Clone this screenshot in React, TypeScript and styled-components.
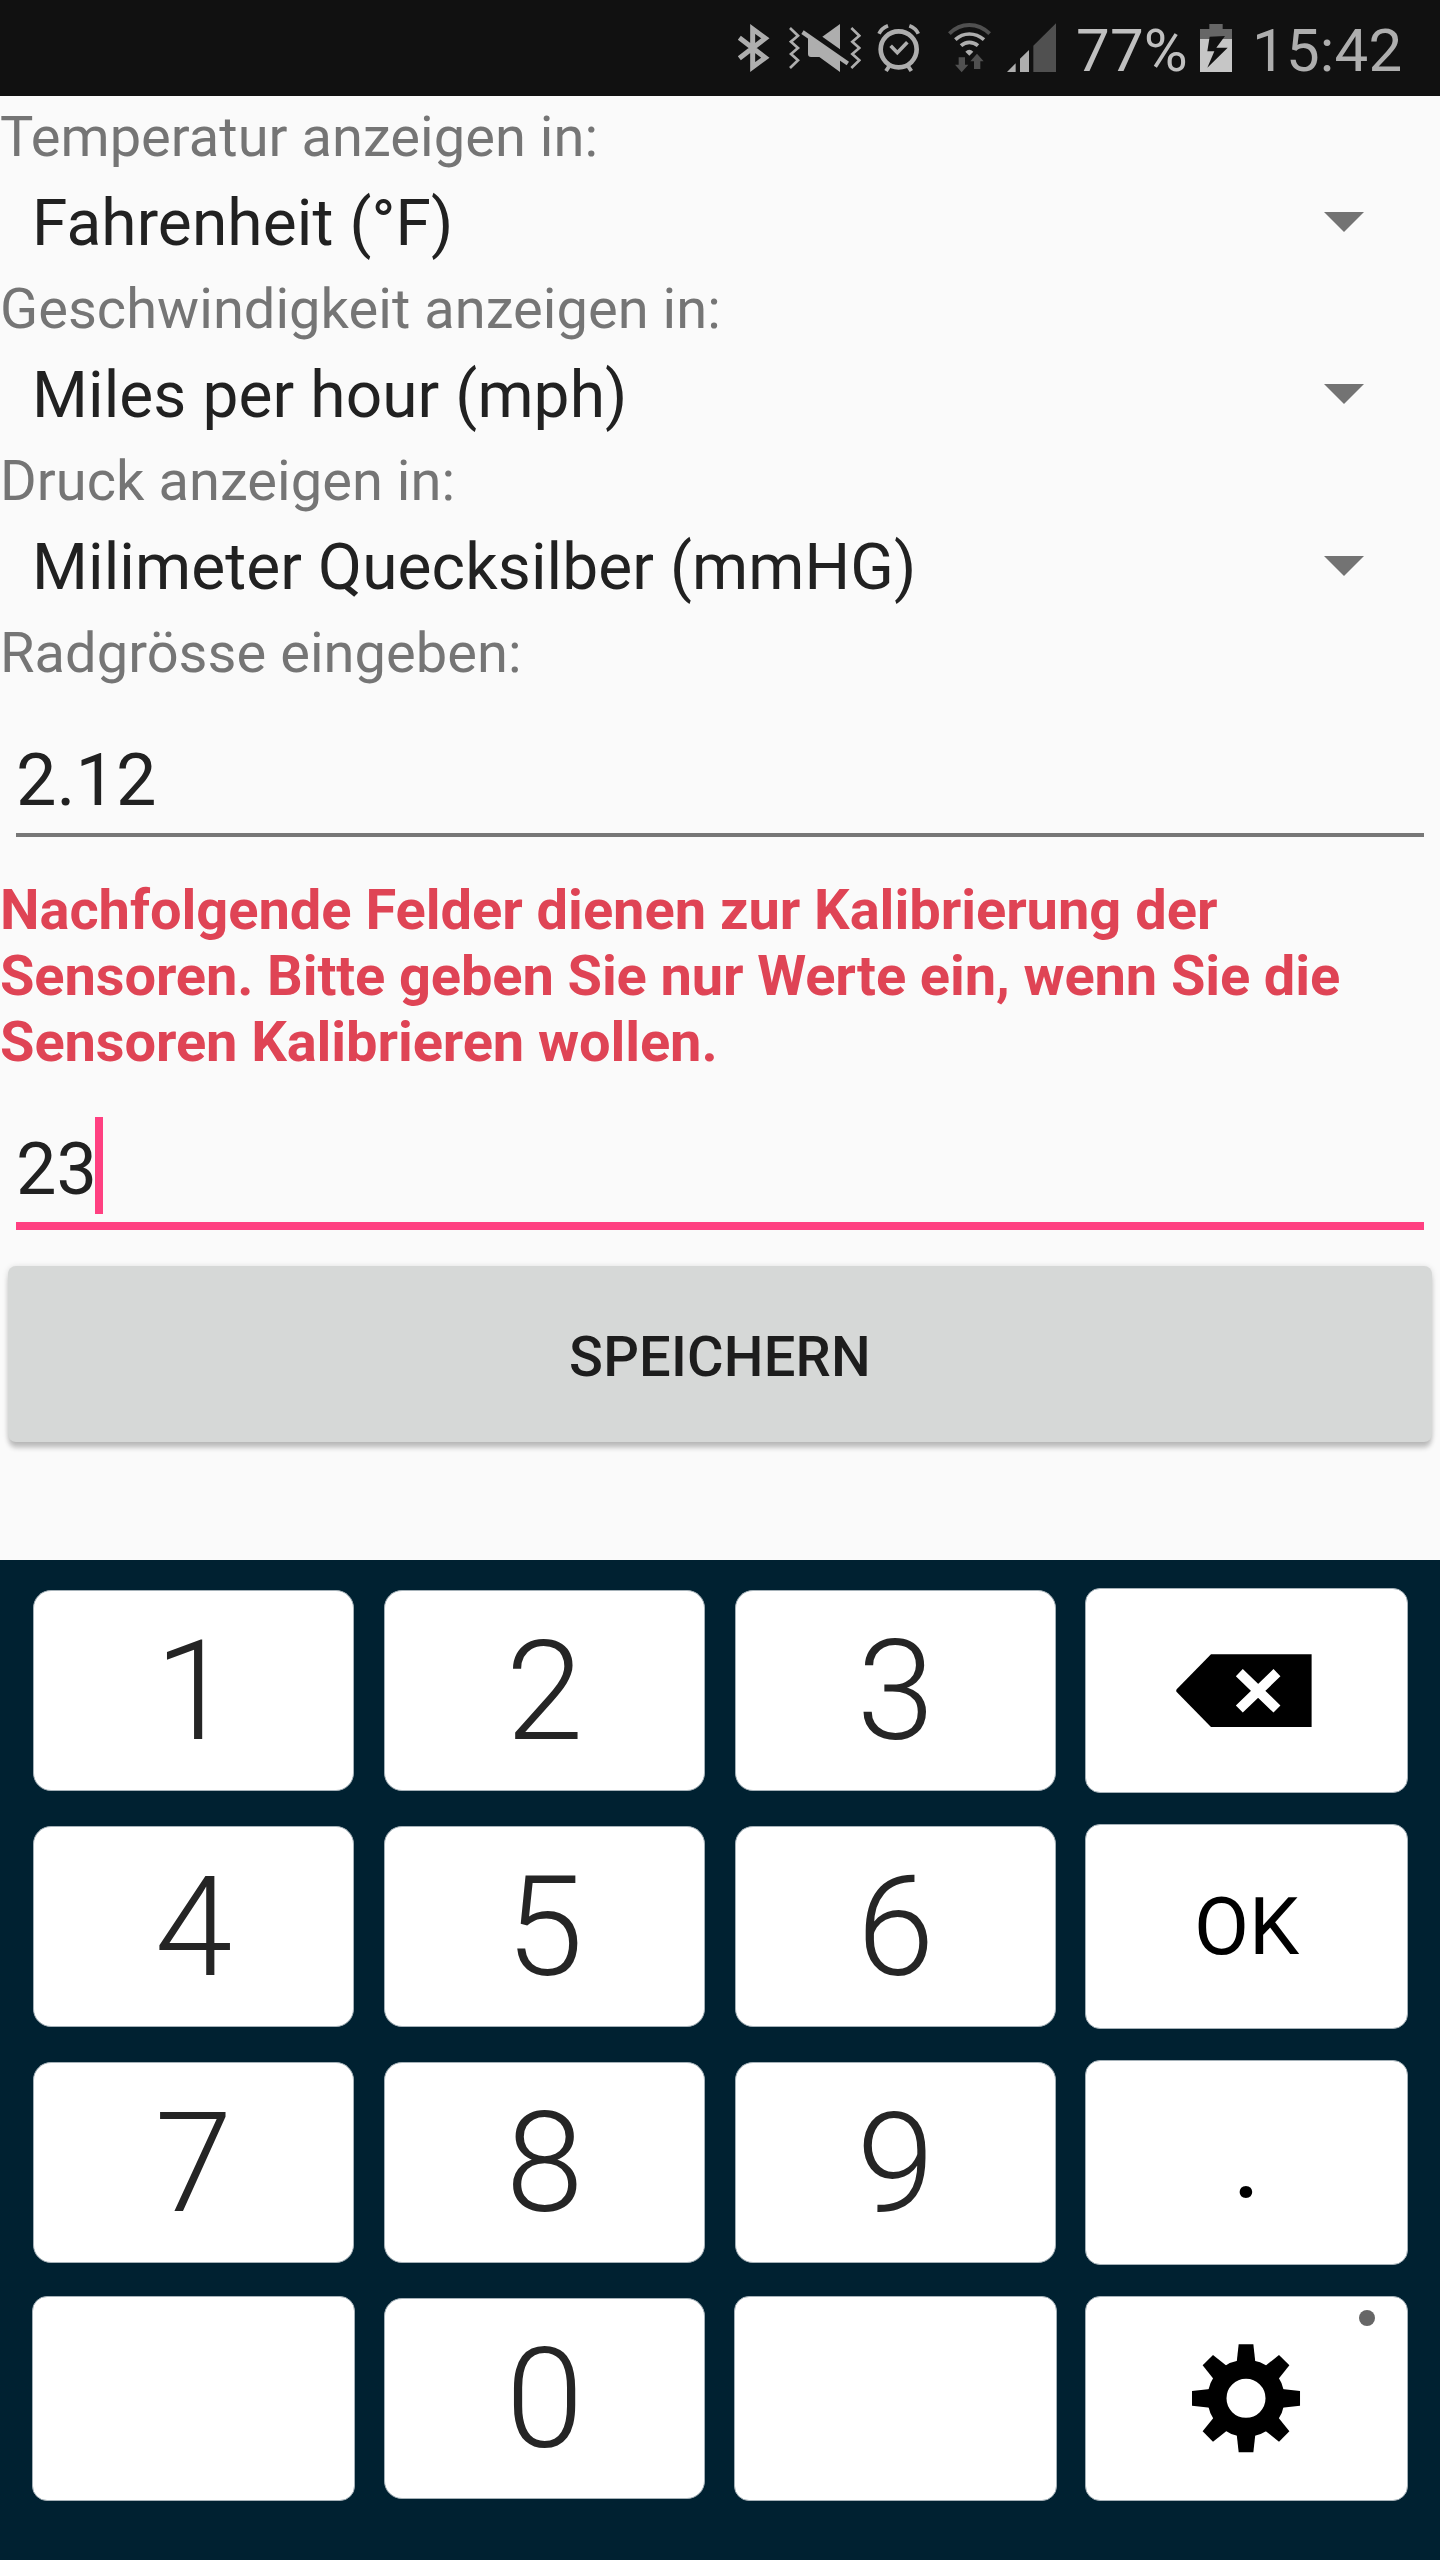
import React from "react";
import styled, { createGlobalStyle } from "styled-components";

const GlobalStyle = createGlobalStyle`
  *, *::before, *::after { box-sizing: border-box; }
  body { margin: 0; background: #fafafa; }
`;

const Screen = styled.div`
  width: 1440px;
  height: 2560px;
  display: flex;
  flex-direction: column;
  overflow: hidden;
  background: #fafafa;
  color: #212121;
  font-family: Roboto, "Liberation Sans", sans-serif;
`;

const StatusBar = styled.header`
  flex: none;
  height: 96px;
  padding-right: 36px;
  display: flex;
  align-items: center;
  justify-content: flex-end;
  background: #111;
`;

const StatusIcon = styled.svg<{ $width: number; $after: number }>`
  flex: none;
  display: block;
  width: ${(p) => p.$width}px;
  height: 96px;
  margin-right: ${(p) => p.$after}px;
`;

const StatusText = styled.span<{ $color: string; $width: number }>`
  flex: none;
  width: ${(p) => p.$width}px;
  padding-top: 5px;
  font-size: 60px;
  line-height: 70px;
  letter-spacing: 0.2px;
  white-space: nowrap;
  color: ${(p) => p.$color};
`;

const Form = styled.main`
  flex: none;
  height: 1464px;
  display: flex;
  flex-direction: column;
`;

const Label = styled.label`
  flex: none;
  height: 76px;
  padding-top: 8px;
  font-size: 56px;
  line-height: 66px;
  letter-spacing: 0.04px;
  color: #757575;
`;

const Spinner = styled.div`
  flex: none;
  height: 96px;
  padding: 6px 76px 0 32px;
  display: flex;
  align-items: center;
  justify-content: space-between;
  font-size: 64px;
  line-height: 75px;
  letter-spacing: 0.1px;
`;

const Caret = styled.svg`
  display: block;
  width: 40px;
  height: 20px;
  margin-bottom: 2px;
`;

const Field = styled.div<{ $focused?: boolean; $top: number }>`
  flex: none;
  display: flex;
  align-items: flex-start;
  margin: ${(p) => p.$top}px 16px 0;
  height: ${(p) => (p.$focused ? 102 : 98)}px;
  border-bottom: ${(p) => (p.$focused ? "8px solid #ff4081" : "4px solid #777")};
  font-size: 72px;
  line-height: 84px;
`;

const Cursor = styled.span`
  width: 8px;
  height: 97px;
  margin: -11px 0 0 -2px;
  background: #ff4081;
`;

const Warning = styled.p`
  flex: none;
  margin: 40px 0 0;
  font-size: 56px;
  line-height: 66px;
  font-weight: 700;
  color: #df4455;
`;

const WarningLine = styled.span<{ $tracking: number }>`
  display: block;
  white-space: nowrap;
  letter-spacing: ${(p) => p.$tracking}px;
`;

const SaveButton = styled.button`
  flex: none;
  height: 176px;
  margin: 36px 8px 0;
  padding: 6px 0 0;
  border: 0;
  border-radius: 8px;
  background: #d6d8d7;
  box-shadow: 0 7px 5px -1px rgba(0, 0, 0, 0.2), 0 1px 6px rgba(0, 0, 0, 0.14);
  font: 500 56px/66px Roboto, "Liberation Sans", sans-serif;
  letter-spacing: 0.2px;
  color: #1d1d1d;
`;

const Keyboard = styled.section`
  flex: none;
  height: 1000px;
  padding: 30px 33px;
  display: grid;
  grid-template-columns: repeat(4, 321px);
  grid-auto-rows: 201px;
  gap: 35px 30px;
  background: #002131;
`;

const DigitKey = styled.div`
  display: flex;
  align-items: center;
  justify-content: center;
  border: 1px solid #a5b1b8;
  border-radius: 18px;
  background: #fff;
  font-size: 140px;
  line-height: 164px;
  font-weight: 300;
  color: #252525;
`;

const FunctionKey = styled.div<{ $lift?: number; $size?: number }>`
  position: relative;
  margin: -2px -1px;
  padding-bottom: ${(p) => p.$lift ?? 0}px;
  display: flex;
  align-items: center;
  justify-content: center;
  border: 1px solid #a5b1b8;
  border-radius: 15px;
  background: #fff;
  font-size: ${(p) => p.$size ?? 80}px;
  line-height: 94px;
  color: #000;
`;

const KeyIcon = styled.svg<{ $w: number; $h: number }>`
  display: block;
  width: ${(p) => p.$w}px;
  height: ${(p) => p.$h}px;
`;

const HintDot = styled.i`
  position: absolute;
  top: 13px;
  right: 32px;
  width: 16px;
  height: 16px;
  border-radius: 50%;
  background: #666;
`;

const LIGHT = "#aeaeae";
const DIM = "#505050";

const Bluetooth = () => (
  <StatusIcon viewBox="51 0 102 288" $width={34} $after={18}>
    <path d="M58 113.500L136 173L98 201V87L136 115L58 174.500" fill="none" stroke={LIGHT} strokeWidth="15" strokeMiterlimit="10" />
  </StatusIcon>
);

const Muted = () => (
  <StatusIcon viewBox="207 0 216 288" $width={72} $after={16}>
    <g fill="none" stroke={LIGHT} strokeWidth="8">
      <path d="M210 84L234 107L213 125L234 144L213 162L234 181L210 204" />
      <path d="M394 84L418 107L397 125L418 144L397 162L418 181L394 204" />
    </g>
    <g fill={LIGHT}>
      <path d="M307 110L360 72V148Z" />
      <path d="M264 112L360 176V216L298 171H273Q264 171 264 162Z" />
      <path d="M251 91L387 185L380 196L244 102Z" />
    </g>
  </StatusIcon>
);

const Alarm = () => (
  <StatusIcon viewBox="471 0 129 288" $width={43} $after={28}>
    <g fill="none" stroke={LIGHT}>
      <circle cx="536" cy="148" r="54" strokeWidth="14" />
      <path d="M512 137L532 158L562 127" strokeWidth="11" />
      <path d="M510 195L498 213M562 195L574 213" strokeWidth="12" />
      <path d="M477 101Q485 84 504 77M595 101Q587 84 568 77" strokeWidth="11" />
    </g>
  </StatusIcon>
);

const Wifi = () => (
  <StatusIcon viewBox="684 0 129 288" $width={43} $after={16}>
    <g fill="none">
      <path d="M688 101Q714 75 748 75T809 101" stroke={DIM} strokeWidth="12" />
      <g stroke={LIGHT} strokeWidth="11">
        <path d="M706 119Q724 102 748 102T792 119" />
        <path d="M723 137Q734 127 748 127T774 137" />
      </g>
    </g>
    <path d="M736 155Q748 143 760 155L748 167Z" fill={LIGHT} />
    <path d="M716 172H735V194H745L725 217L705 194H716Z" fill={DIM} />
    <path d="M771 161L791 184H781V207H762V184H751Z" fill={DIM} />
  </StatusIcon>
);

const Signal = () => (
  <StatusIcon viewBox="861 0 147 288" $width={49} $after={20}>
    <path d="M861 216H887V190ZM900 216H927V150L900 176Z" fill={LIGHT} />
    <path d="M940 216H1008V70L940 137Z" fill={DIM} />
  </StatusIcon>
);

const Battery = () => (
  <StatusIcon viewBox="360 0 96 288" $width={32} $after={20}>
    <path d="M388 72H428V87H456V117H360V87H388Z" fill="#666" />
    <path d="M360 117H456V216H360Z" fill="#c6c6c6" />
    <path d="M389 110L435 108L409 143H443L382 203L403 154H382Z" fill="#111" />
  </StatusIcon>
);

const Backspace = () => (
  <KeyIcon viewBox="348 282 424 220" $w={141.3} $h={73.3}>
    <path d="M453 283H755V501H453L350 396Q347 392 350 388Z" />
    <path d="M538 338L651 447M651 338L538 447" stroke="#fff" strokeWidth="30" />
  </KeyIcon>
);

const Gear = () => (
  <KeyIcon viewBox="-162 -163 326 326" $w={108.7} $h={108.7}>
    <circle r="87" fill="none" stroke="#000" strokeWidth="57" />
    {[0, 45, 90, 135, 180, 225, 270, 315].map((angle) => (
      <path key={angle} d="M-22 -162H22L28 -108H-28Z" transform={`rotate(${angle})`} />
    ))}
  </KeyIcon>
);

const settings = [
  { label: "Temperatur anzeigen in:", value: "Fahrenheit (°F)" },
  { label: "Geschwindigkeit anzeigen in:", value: "Miles per hour (mph)" },
  { label: "Druck anzeigen in:", value: "Milimeter Quecksilber (mmHG)" },
];

export default function App() {
  return (
    <>
      <GlobalStyle />
      <Screen>
        <StatusBar>
          <Bluetooth />
          <Muted />
          <Alarm />
          <Wifi />
          <Signal />
          <StatusText $color="#c0c0c0" $width={124}>77%</StatusText>
          <Battery />
          <StatusText $color="#aeaeae" $width={152}>15:42</StatusText>
        </StatusBar>
        <Form>
          {settings.map((s) => (
            <React.Fragment key={s.label}>
              <Label>{s.label}</Label>
              <Spinner>
                {s.value}
                <Caret viewBox="0 0 40 20">
                  <path d="M0 0H40L20 20Z" fill="#737373" />
                </Caret>
              </Spinner>
            </React.Fragment>
          ))}
          <Label>Radgrösse eingeben:</Label>
          <Field $top={51}>2.12</Field>
          <Warning>
            <WarningLine $tracking={-0.03}>Nachfolgende Felder dienen zur Kalibrierung der</WarningLine>
            <WarningLine $tracking={-0.12}>Sensoren. Bitte geben Sie nur Werte ein, wenn Sie die</WarningLine>
            <WarningLine $tracking={-0.09}>Sensoren Kalibrieren wollen.</WarningLine>
          </Warning>
          <Field $focused $top={53}>
            23
            <Cursor />
          </Field>
          <SaveButton>SPEICHERN</SaveButton>
        </Form>
        <Keyboard>
          <DigitKey>1</DigitKey>
          <DigitKey>2</DigitKey>
          <DigitKey>3</DigitKey>
          <FunctionKey><Backspace /></FunctionKey>
          <DigitKey>4</DigitKey>
          <DigitKey>5</DigitKey>
          <DigitKey>6</DigitKey>
          <FunctionKey>OK</FunctionKey>
          <DigitKey>7</DigitKey>
          <DigitKey>8</DigitKey>
          <DigitKey>9</DigitKey>
          <FunctionKey $lift={8} $size={112}>.</FunctionKey>
          <FunctionKey />
          <DigitKey>0</DigitKey>
          <FunctionKey />
          <FunctionKey>
            <Gear />
            <HintDot />
          </FunctionKey>
        </Keyboard>
      </Screen>
    </>
  );
}
